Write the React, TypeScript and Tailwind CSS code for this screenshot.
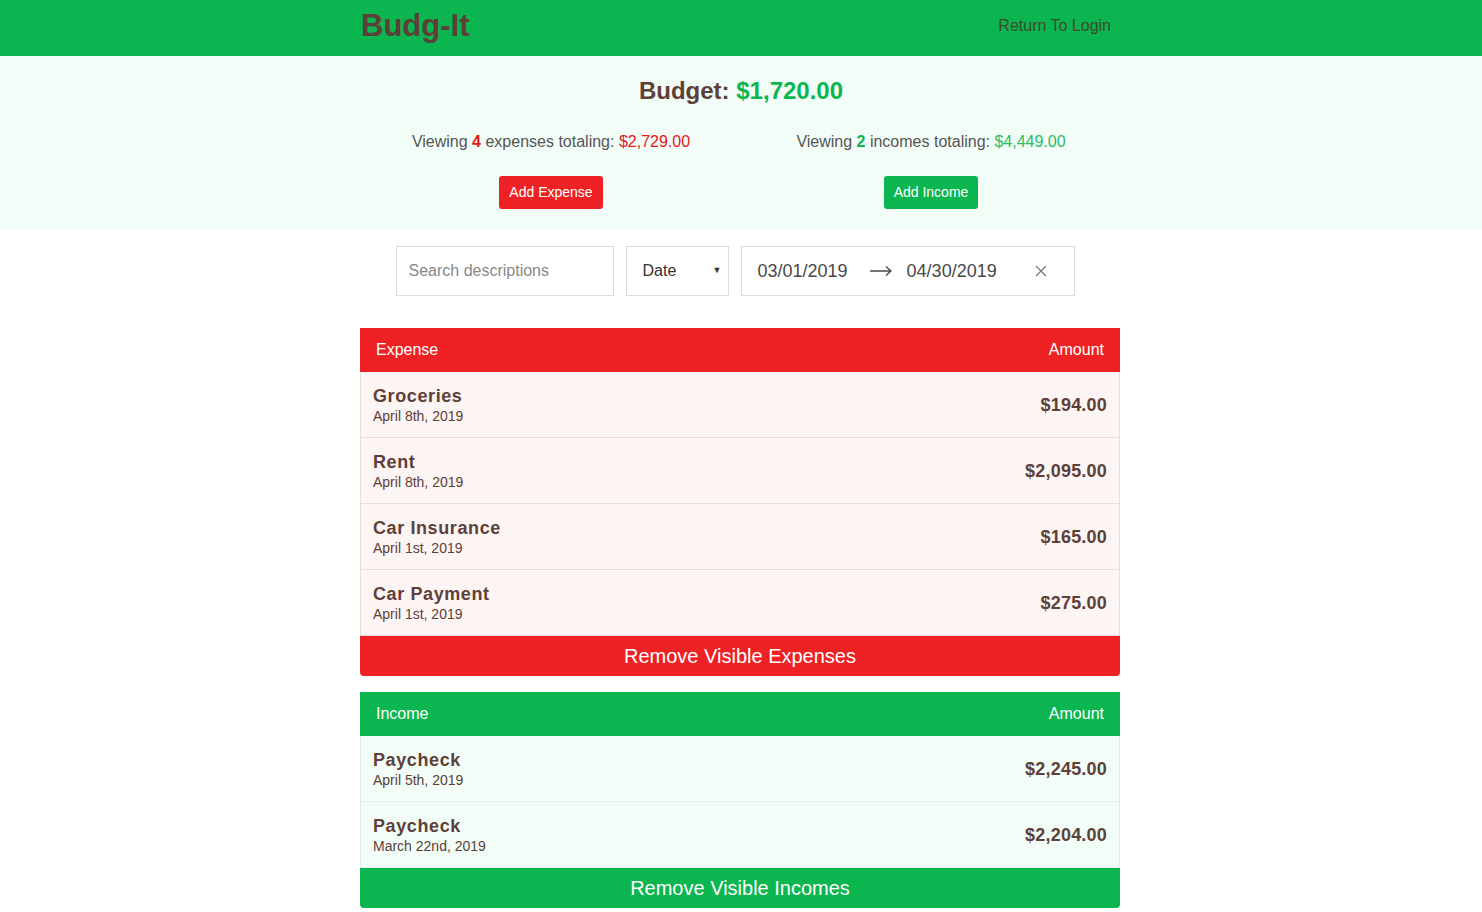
const brown = "text-[#5d4037]";

type Item = { title: string; date: string; amount: string };

const expenses: Item[] = [
  { title: "Groceries", date: "April 8th, 2019", amount: "$194.00" },
  { title: "Rent", date: "April 8th, 2019", amount: "$2,095.00" },
  { title: "Car Insurance", date: "April 1st, 2019", amount: "$165.00" },
  { title: "Car Payment", date: "April 1st, 2019", amount: "$275.00" },
];

const incomes: Item[] = [
  { title: "Paycheck", date: "April 5th, 2019", amount: "$2,245.00" },
  { title: "Paycheck", date: "March 22nd, 2019", amount: "$2,204.00" },
];

function Row({ item, income }: { item: Item; income?: boolean }) {
  return (
    <div
      className={
        "flex items-center justify-between h-[66px] px-[12px] border-b " +
        (income ? "bg-[#f2fdf8] border-[#e3f2ea]" : "bg-[#fdf4f4] border-[#eedcdc]")
      }
    >
      <div className="flex flex-col pt-px">
        <span className={"text-[18px] font-bold tracking-[0.6px] leading-[22px] " + brown}>{item.title}</span>
        <span className={"text-[14px] leading-[18px] " + brown}>{item.date}</span>
      </div>
      <span className={"text-[18px] font-bold tracking-[0.2px] pt-[2px] " + brown}>{item.amount}</span>
    </div>
  );
}

function Table({ title, items, income }: { title: string; items: Item[]; income?: boolean }) {
  return (
    <div>
      <div
        className={
          "flex items-center justify-between h-[44px] px-[16px] text-white text-[16px] " +
          (income ? "bg-[#0bb54f]" : "bg-[#ee2224]")
        }
      >
        <span>{title}</span>
        <span>Amount</span>
      </div>
      <div className={"border-x " + (income ? "border-[#d8efe2]" : "border-[#eed8d8]")}>
        {items.map((it, i) => (
          <Row key={i} item={it} income={income} />
        ))}
      </div>
      <button
        className={
          "w-full h-[40px] rounded-b text-white text-[20px] " +
          (income ? "bg-[#0bb54f]" : "bg-[#ee2224]")
        }
      >
        {income ? "Remove Visible Incomes" : "Remove Visible Expenses"}
      </button>
    </div>
  );
}

export default function App() {
  return (
    <div className="min-h-screen bg-white font-['Liberation_Sans',Arial,sans-serif]">
      {/* top bar */}
      <header className="bg-[#0bb54f] h-[56px]">
        <div className="w-[760px] mx-auto h-full flex items-center justify-between">
          <h1 className={"text-[31px] font-bold -mt-1 " + brown}>Budg-It</h1>
          <a className="text-[16px] text-[#3c4a2c] mr-[10px] -mt-1">Return To Login</a>
        </div>
      </header>

      {/* summary */}
      <section className="bg-[#f3fdf8] h-[174px] pt-[17px]">
        <h2 className={"text-center text-[24px] font-bold " + brown}>
          Budget: <span className="text-[#0bb54f]">$1,720.00</span>
        </h2>
        <div className="w-[760px] mx-auto grid grid-cols-2 mt-[21px]">
          <div className="flex flex-col items-center">
            <p className="text-[16px] text-[#555]">
              Viewing <span className="font-bold text-[#e3181b]">4</span> expenses totaling:{" "}
              <span className="text-[#e3181b]">$2,729.00</span>
            </p>
            <button className="mt-[22px] h-[33px] px-[10px] rounded-[3px] bg-[#ee2224] text-white text-[14px]">
              Add Expense
            </button>
          </div>
          <div className="flex flex-col items-center">
            <p className="text-[16px] text-[#555]">
              Viewing <span className="font-bold text-[#0bb54f]">2</span> incomes totaling:{" "}
              <span className="text-[#2dbb62]">$4,449.00</span>
            </p>
            <button className="mt-[22px] h-[33px] px-[10px] rounded-[3px] bg-[#0bb54f] text-white text-[14px]">
              Add Income
            </button>
          </div>
        </div>
      </section>

      {/* filters */}
      <div className="flex justify-center gap-[12px] mt-[16px] ml-[-12px]">
        <div className="w-[218px] h-[50px] border border-[#dcdcdc] flex items-center px-[12px] text-[16px] text-[#888]">
          Search descriptions
        </div>
        <div className="w-[103px] h-[50px] border border-[#dcdcdc] flex items-center justify-between pl-[16px] pr-[6px] text-[16px] text-[#333]">
          <span>Date</span>
          <span className="text-[9px]">▼</span>
        </div>
        <div className="w-[334px] h-[50px] border border-[#dcdcdc] flex items-center pl-[16px] text-[18px] text-[#484848]">
          <span>03/01/2019</span>
          <svg className="ml-[21px] mr-[14px]" width="24" height="12" viewBox="0 0 24 12" fill="none" stroke="#484848" strokeWidth="1.3">
            <path d="M1 6h21M17 1.5l5 4.5-5 4.5" />
          </svg>
          <span>04/30/2019</span>
          <svg className="ml-[38px]" width="12" height="12" viewBox="0 0 12 12" stroke="#777" strokeWidth="1.3">
            <path d="M1 1l10 10M11 1L1 11" />
          </svg>
        </div>
      </div>

      {/* tables */}
      <div className="w-[760px] mx-auto mt-[32px] flex flex-col gap-[16px] -translate-x-px">
        <Table title="Expense" items={expenses} />
        <Table title="Income" items={incomes} income />
      </div>
    </div>
  );
}
